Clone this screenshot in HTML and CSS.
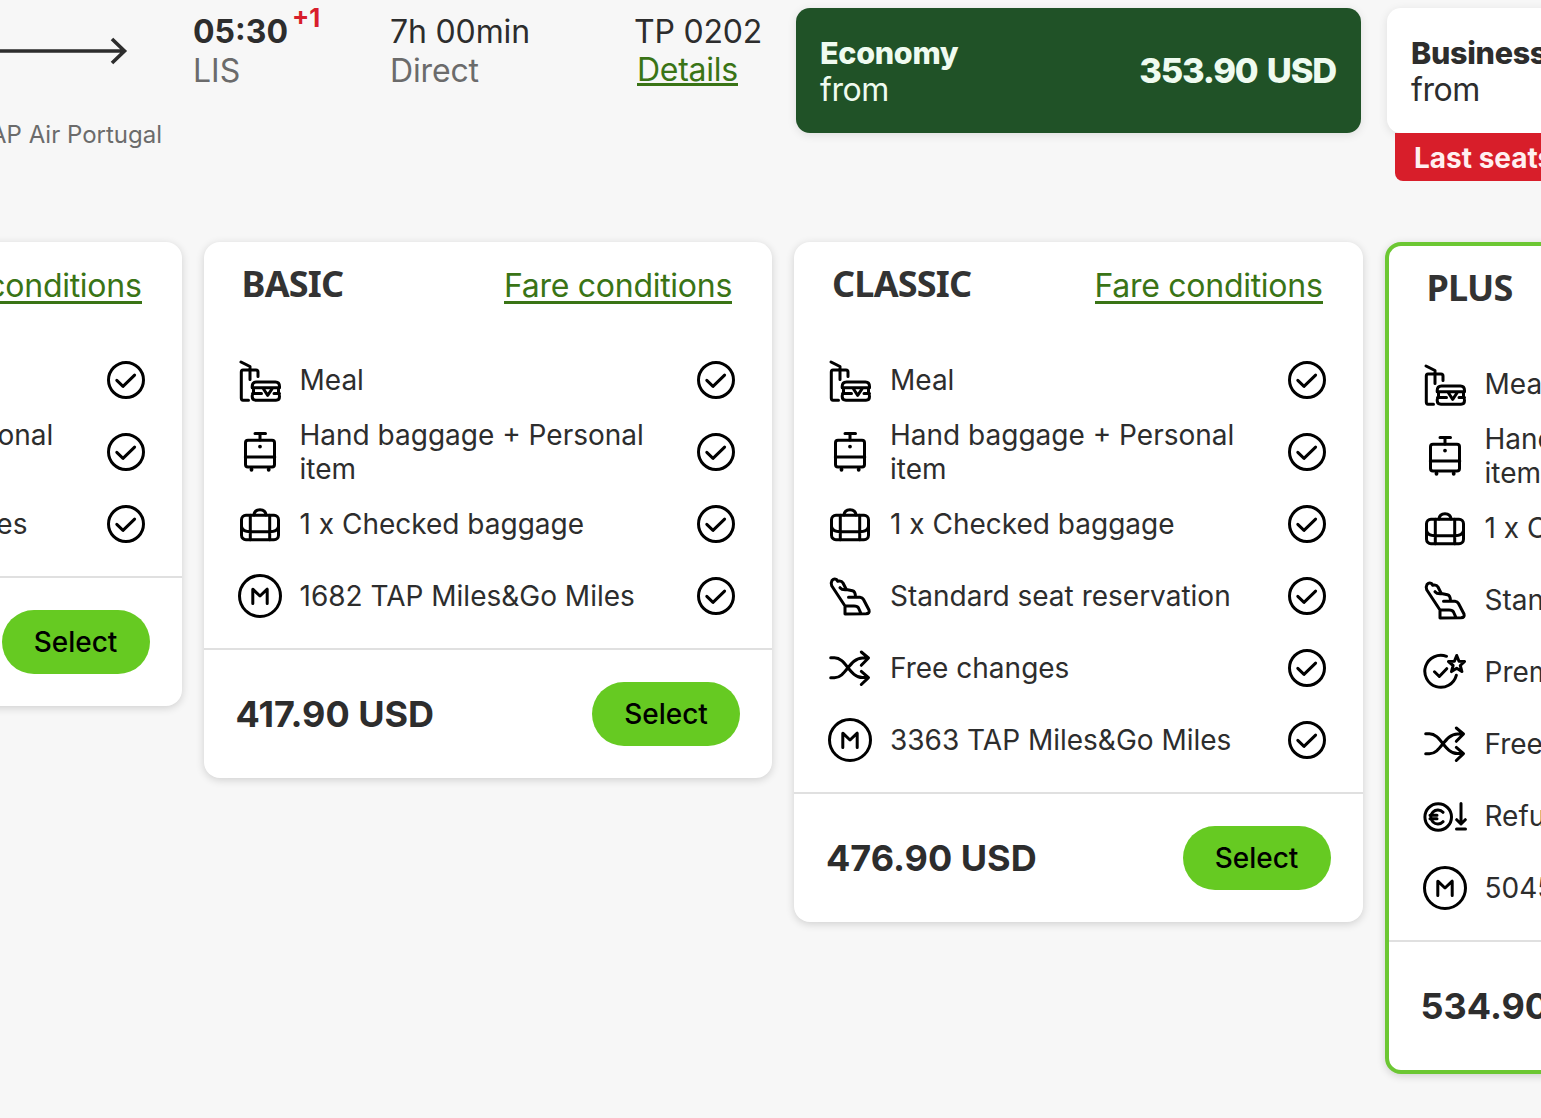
FILE: index.html
```html
<!DOCTYPE html>
<html lang="en">
<head>
<meta charset="utf-8">
<title>Flight fares</title>
<link rel="stylesheet" href="styles.css">
</head>
<body>
<svg class="sprite" aria-hidden="true">
  <symbol id="check" viewBox="0 0 38 38"><circle cx="19" cy="19" r="17.500"/><path d="M9.800 19.400 16 25.300 27.600 14.100"/></symbol>
  <symbol id="meal" viewBox="0 0 44 44"><path d="M3 4 12 8.500V21.500M20 18.400V14Q20 12 18 12H5Q3.300 12 3.300 14V40Q3.300 42.200 5 42.200H10.500M14.200 29.800V28.500Q14.200 24 18.500 24H37.500Q41.500 24 41.500 28.500V29.800ZM14.500 35.600H23.500M36 35.600H41.500M25.200 30.500 29.700 37.300 34.300 30.500M15.500 30V35.600Q14.200 36 14.200 38.500Q14.200 42.200 18 42.200H38Q41.500 42.200 41.500 38.500Q41.500 36 40.500 35.600V30"/></symbol>
  <symbol id="cabin" viewBox="0 0 44 44"><rect x="7.500" y="10.300" width="29" height="26.700" rx="2.500"/><path d="M17 3.600H27.500M22 3.600V10M7.300 27H36.800"/><path stroke-width="3.800" d="M22 16.600H22.010M13.500 39.300V39.800M30.700 39.300V39.800"/></symbol>
  <symbol id="suitcase" viewBox="0 0 44 44"><rect x="3.500" y="13.200" width="37" height="24.500" rx="4.500"/><path d="M16 13Q16.500 7.700 22 7.700T28 13M12.300 13.200V37.700M31.700 13.200V37.700M3.500 24.500Q4.500 29.700 12.300 29.700H31.700Q39.500 29.700 40.500 24.500"/></symbol>
  <symbol id="miles" viewBox="0 0 44 44"><circle cx="22" cy="22" r="20.500"/><path d="M14.800 29.500V15.200L22 22 29.200 15.200V29.500"/></symbol>
  <symbol id="seat" viewBox="0 0 44 44"><path d="M17 32 3.700 11.800Q2.600 9 4 6.500Q6 4 8.500 5.500L9.800 7.300Q13.500 6.500 15 9L18.300 15.500 24.500 16.800Q27.500 17.500 27.500 23.300H32Q34.500 23.500 35.500 25.500L41 36Q42 39.500 38 39.800L17 40ZM12 13.700Q14 16.200 18.500 15.700M20.500 23.300H32M17 32H26Q29.500 32 30.500 34L33 39.700"/></symbol>
  <symbol id="changes" viewBox="0 0 44 44"><path d="M2.700 11.800H6.500C18 11.800 21.500 31.600 34.500 31.600H40M2.700 31.700H6.500C18 31.700 21.500 12 34.500 12H40M33.300 6 40.500 12 33.300 19.300M33.300 25.400 40.500 31.600 33.300 38.500"/></symbol>
  <symbol id="premium" viewBox="0 0 44 44"><path d="M23.500 6.300A16 16 0 1 0 33.300 25.300M11.500 21.800 16.300 26.500 23.700 18.700M33.700 5.500 36 11.300 41.600 11.500 37.300 15.500 38.900 21.600 33.700 18.300 28.500 21.600 30.100 15.500 25.500 11.500 31.400 11.300Z"/></symbol>
  <symbol id="refund" viewBox="0 0 44 44"><circle cx="15.200" cy="23" r="13.300"/><path d="M20 18.300A7 7 0 1 0 20 27.700M7 21.300H14M7 24.700H14M38 9.500V30M33.700 25.700 38 30 42.300 25.700M33.500 35H42.500"/></symbol>
</svg>

<header class="flight">
  <div class="route">
    <svg class="arrow" viewBox="0 0 128 30"><path d="M0 15H125M112 3 124.500 15 112 27"/></svg>
    <p class="carrier">TAP Air Portugal</p>
  </div>
  <div class="arrival">
    <p><strong>05:30</strong><sup>+1</sup></p>
    <p class="muted">LIS</p>
  </div>
  <div class="duration">
    <p>7h 00min</p>
    <p class="muted">Direct</p>
  </div>
  <div class="number">
    <p>TP 0202</p>
    <a class="link details">Details</a>
  </div>
  <div class="cabin active">
    <div class="cabin-box">
      <p><strong>Economy</strong><br>from</p>
      <span class="cabin-price">353.90 USD</span>
    </div>
  </div>
  <div class="cabin">
    <div class="cabin-box">
      <p><strong>Business</strong><br>from</p>
    </div>
    <div class="badge">Last seats</div>
  </div>
</header>

<main class="fares">
  <section class="fare">
    <div class="fare-head"><h2></h2><a class="link">Fare conditions</a></div>
    <ul>
      <li><svg class="icon"><use href="#meal"/></svg><span>Meal</span><svg class="tick"><use href="#check"/></svg></li>
      <li><svg class="icon"><use href="#cabin"/></svg><span>Hand baggage + Personal item</span><svg class="tick"><use href="#check"/></svg></li>
      <li><svg class="icon"><use href="#miles"/></svg><span>841 TAP Miles&amp;Go Miles</span><svg class="tick"><use href="#check"/></svg></li>
    </ul>
    <div class="fare-foot"><strong></strong><button>Select</button></div>
  </section>

  <section class="fare">
    <div class="fare-head"><h2>BASIC</h2><a class="link">Fare conditions</a></div>
    <ul>
      <li><svg class="icon"><use href="#meal"/></svg><span>Meal</span><svg class="tick"><use href="#check"/></svg></li>
      <li><svg class="icon"><use href="#cabin"/></svg><span>Hand baggage + Personal item</span><svg class="tick"><use href="#check"/></svg></li>
      <li><svg class="icon"><use href="#suitcase"/></svg><span>1 x Checked baggage</span><svg class="tick"><use href="#check"/></svg></li>
      <li><svg class="icon"><use href="#miles"/></svg><span>1682 TAP Miles&amp;Go Miles</span><svg class="tick"><use href="#check"/></svg></li>
    </ul>
    <div class="fare-foot"><strong>417.90 USD</strong><button>Select</button></div>
  </section>

  <section class="fare">
    <div class="fare-head"><h2>CLASSIC</h2><a class="link">Fare conditions</a></div>
    <ul>
      <li><svg class="icon"><use href="#meal"/></svg><span>Meal</span><svg class="tick"><use href="#check"/></svg></li>
      <li><svg class="icon"><use href="#cabin"/></svg><span>Hand baggage + Personal item</span><svg class="tick"><use href="#check"/></svg></li>
      <li><svg class="icon"><use href="#suitcase"/></svg><span>1 x Checked baggage</span><svg class="tick"><use href="#check"/></svg></li>
      <li><svg class="icon"><use href="#seat"/></svg><span>Standard seat reservation</span><svg class="tick"><use href="#check"/></svg></li>
      <li><svg class="icon"><use href="#changes"/></svg><span>Free changes</span><svg class="tick"><use href="#check"/></svg></li>
      <li><svg class="icon"><use href="#miles"/></svg><span>3363 TAP Miles&amp;Go Miles</span><svg class="tick"><use href="#check"/></svg></li>
    </ul>
    <div class="fare-foot"><strong>476.90 USD</strong><button>Select</button></div>
  </section>

  <section class="fare selected">
    <div class="fare-head"><h2>PLUS</h2></div>
    <ul>
      <li><svg class="icon"><use href="#meal"/></svg><span>Meal</span></li>
      <li><svg class="icon"><use href="#cabin"/></svg><span>Hand baggage + Personal item</span></li>
      <li><svg class="icon"><use href="#suitcase"/></svg><span>1 x Checked baggage</span></li>
      <li><svg class="icon"><use href="#seat"/></svg><span>Standard seat reservation</span></li>
      <li><svg class="icon"><use href="#premium"/></svg><span>Premium check-in</span></li>
      <li><svg class="icon"><use href="#changes"/></svg><span>Free changes</span></li>
      <li><svg class="icon"><use href="#refund"/></svg><span>Refundable</span></li>
      <li><svg class="icon"><use href="#miles"/></svg><span>5045 TAP Miles&amp;Go Miles</span></li>
    </ul>
    <div class="fare-foot"><strong>534.90 USD</strong></div>
  </section>
</main>
</body>
</html>
```

FILE: styles.css
```css
* { box-sizing: border-box; }

html { overflow: hidden; }

body {
  margin: 0;
  height: 1118px;
  overflow: hidden;
  background: #f7f7f7;
  color: #2d2d2d;
  font-family: Inter, "Liberation Sans", sans-serif;
  font-size: 32px;
}

p, h2, ul { margin: 0; padding: 0; }

.sprite { display: none; }

svg {
  flex: none;
  fill: none;
  stroke: #000;
  stroke-width: 3;
  stroke-linecap: round;
  stroke-linejoin: round;
}

.link {
  color: #3a7416;
  letter-spacing: -.28px;
  white-space: nowrap;
  border-bottom: 3px solid;
}

.muted { color: #6b6b6b; }

/* Flight summary */
.flight {
  display: flex;
  height: 242px;
  padding-top: 8px;
  white-space: nowrap;
  line-height: 39px;
}

.flight > div { flex: none; }

.route {
  display: flex;
  flex-direction: column;
  align-items: flex-end;
  width: 162px;
  margin-right: 31px;
  padding-top: 28px;
}

.arrow {
  width: 128px;
  height: 30px;
  margin-right: 34px;
  stroke: #2d2d2d;
  stroke-width: 3.6;
  stroke-linecap: butt;
  stroke-linejoin: miter;
}

.carrier {
  margin-top: 49px;
  color: #6b6b6b;
  font-size: 24px;
}

.arrival { width: 197px; padding-top: 4px; }
.duration { width: 244px; padding-top: 4px; letter-spacing: -.15px; }
.number { width: 162px; padding-top: 4px; letter-spacing: -.2px; }

sup {
  margin-left: 4px;
  color: #d81e2c;
  font-size: 25.5px;
  font-weight: 700;
  line-height: 0;
  vertical-align: 16px;
}

.details {
  display: block;
  width: max-content;
  height: 35px;
  margin-left: 3px;
  line-height: 38px;
}

.cabin { width: 565px; margin-right: 26px; }

.cabin-box {
  display: flex;
  align-items: center;
  justify-content: space-between;
  height: 125px;
  padding: 0 25px 0 24px;
  border-radius: 14px;
  background: #fff;
  box-shadow: 0 2px 10px rgba(0, 0, 0, .1);
  letter-spacing: -.4px;
  line-height: 37px;
}

.active .cabin-box { background: #205227; color: #effbf0; }

.cabin strong { font-size: 30.5px; font-weight: 800; letter-spacing: -.3px; }

.cabin-price {
  font-size: 34.5px;
  font-weight: 800;
  letter-spacing: -1.2px;
  word-spacing: 3px;
}

.badge {
  width: 300px;
  height: 48px;
  margin-left: 8px;
  padding-left: 19px;
  border-radius: 0 0 8px 8px;
  background: #d81e2a;
  color: #fff0f0;
  font-size: 28px;
  font-weight: 700;
  line-height: 51px;
}

/* Fare cards */
.fares {
  display: flex;
  align-items: flex-start;
  gap: 22px;
  margin-left: -387px;
}

.fare {
  flex: none;
  width: 568.5px;
  border-radius: 16px;
  background: #fff;
  box-shadow: 0 2px 8px rgba(0, 0, 0, .16);
}

.fare-head {
  display: flex;
  justify-content: space-between;
  height: 102px;
  padding: 24px 40px 0 38px;
}

.fare-head h2 {
  font: 700 36px/35px "Noto Sans", sans-serif;
  letter-spacing: -.8px;
  color: #333;
}

.fare-head .link { height: 38px; line-height: 39px; }

.fare ul { list-style: none; padding-bottom: 16px; }

.fare li {
  display: flex;
  align-items: center;
  height: 72px;
  padding: 0 37px 0 34px;
  font-size: 28px;
  line-height: 34px;
}

.fare li span { flex: none; width: 380px; margin: 0 auto 0 18px; }

.icon { width: 44px; height: 44px; }
.tick { width: 38px; height: 38px; }

.fare-foot {
  display: flex;
  align-items: center;
  justify-content: space-between;
  height: 130px;
  padding: 0 32px;
  border-top: 2px solid #e0e0e0;
  font-size: 36px;
}

button {
  width: 148px;
  height: 64px;
  padding: 0;
  border: 0;
  border-radius: 32px;
  background: #66ca22;
  color: #000;
  font: 500 28px Inter, sans-serif;
}

.selected { border: 4px solid #6cc733; }
```
